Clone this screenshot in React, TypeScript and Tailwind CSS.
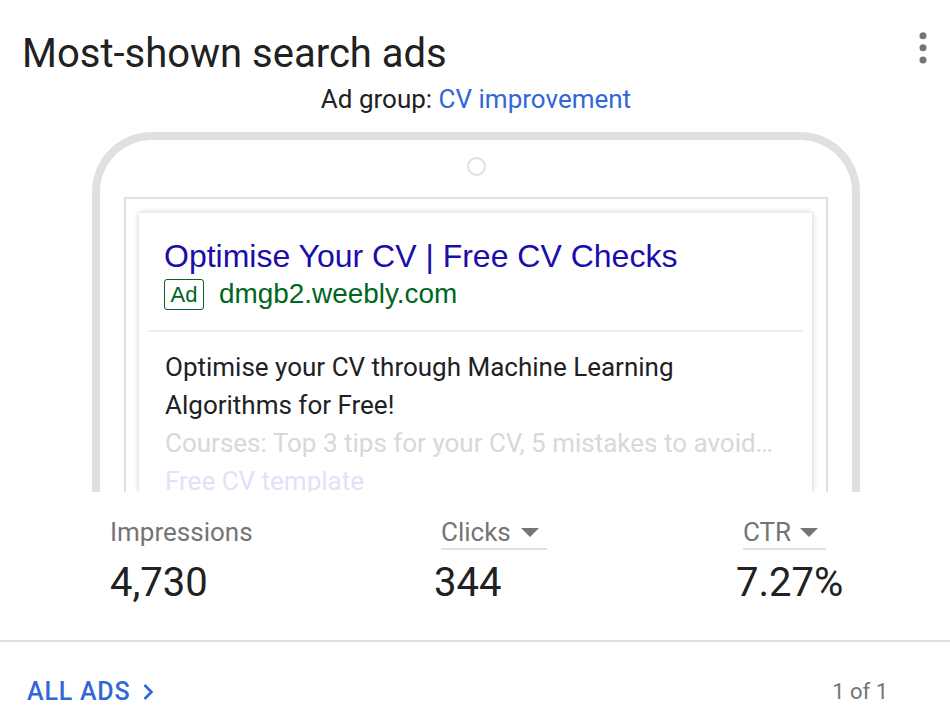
import React from "react";

export default function App() {
  return (
    <div className="w-[950px] h-[720px] bg-white overflow-hidden font-['Roboto',sans-serif] text-[#212121]">
      <div className="flex justify-between items-start pl-[22px] pr-[23px] pt-[32px]">
        <h1 className="text-[40px] leading-[44px]">Most-shown search ads</h1>
        <svg width="8" height="32" viewBox="0 0 8 32" className="text-[#757575]">
          <circle cx="4" cy="3.7" r="3.5" fill="currentColor" />
          <circle cx="4" cy="15.7" r="3.5" fill="currentColor" />
          <circle cx="4" cy="28" r="3.5" fill="currentColor" />
        </svg>
      </div>
      <p className="mt-[9px] text-center text-[26px] leading-[28px] pl-[2px]">
        Ad group: <span className="text-[#3367d6]">CV improvement</span>
      </p>

      <div className="mt-[19px] ml-[92px] w-[768px] h-[360px] border-8 border-b-0 border-[#e0e0e0] rounded-t-[60px] overflow-hidden flex flex-col">
        <div className="shrink-0 mx-auto mt-[17px] w-[19px] h-[19px] rounded-full border-2 border-[#e0e0e0]" />
        <div className="flex-1 min-h-0 mt-[21px] mx-[24px] border-2 border-b-0 border-[#e0e0e0] pl-[13px] pr-[14px] pt-[14px] flex">
          <div className="flex-1 min-w-0 bg-white shadow-[0_0_6px_rgba(0,0,0,0.22)] pt-[23px]">
            <div className="pl-[25px] pr-[26px] font-['Liberation_Sans',Arial,sans-serif]">
              <div className="text-[32px] leading-[40px] text-[#1a0dab] whitespace-nowrap">
                Optimise Your CV | Free CV Checks
              </div>
              <div className="flex items-center gap-[15px] h-[36px]">
                <span className="flex items-center justify-center w-[40px] h-[31px] border-[1.5px] border-[#006621] rounded-[3px] text-[22px] text-[#006621]">
                  Ad
                </span>
                <span className="text-[27.9px] leading-[36px] text-[#006621]">dmgb2.weebly.com</span>
              </div>
            </div>
            <div className="mx-[9px] mt-[18px] h-[2px] bg-[#ededed]" />
            <div className="px-[26px] pt-[16px] text-[26px] leading-[38px]">
              <p className="text-[#202124]">
                Optimise your CV through Machine Learning
                <br />
                Algorithms for Free!
              </p>
              <p className="whitespace-nowrap text-[#d8d8d8]">
                Courses: Top 3 tips for your CV, 5 mistakes to avoid…
              </p>
              <p className="text-[#e3e1f8]">Free CV template</p>
            </div>
          </div>
        </div>
      </div>

      <div className="mt-[24px] pl-[110px] flex">
        <div className="w-[324px]">
          <div className="text-[26px] leading-[32px] text-[#757575]">Impressions</div>
          <div className="mt-[11px] text-[40px] leading-[48px]">4,730</div>
        </div>
        <div className="w-[302px]">
          <div className="ml-[7px] inline-flex items-center gap-[10px] pr-[8px] border-b-2 border-[#e0e0e0] text-[26px] leading-[32px] text-[#757575]">
            Clicks
            <svg width="18" height="9" viewBox="0 0 18 9">
              <path d="M0 0h18L9 9z" fill="#757575" />
            </svg>
          </div>
          <div className="mt-[9px] text-[40px] leading-[48px]">344</div>
        </div>
        <div>
          <div className="ml-[7px] inline-flex items-center gap-[9px] pr-[8px] border-b-2 border-[#e0e0e0] text-[26px] leading-[32px] text-[#757575]">
            CTR
            <svg width="18" height="9" viewBox="0 0 18 9">
              <path d="M0 0h18L9 9z" fill="#757575" />
            </svg>
          </div>
          <div className="mt-[9px] text-[40px] leading-[48px]">7.27%</div>
        </div>
      </div>

      <div className="mt-[33px] border-t-2 border-[#e0e0e0] flex justify-between items-center pl-[27px] pr-[62px] pt-[34px]">
        <div className="flex items-center gap-[12px] text-[25px] leading-[32px] font-medium tracking-[0.8px] text-[#3367d6]">
          ALL ADS
          <svg width="12" height="18" viewBox="0 0 12 18">
            <path d="M2.5 2l7 7-7 7" fill="none" stroke="#3367d6" strokeWidth="2.6" />
          </svg>
        </div>
        <div className="text-[22px] leading-[32px] text-[#757575]">1 of 1</div>
      </div>
    </div>
  );
}
